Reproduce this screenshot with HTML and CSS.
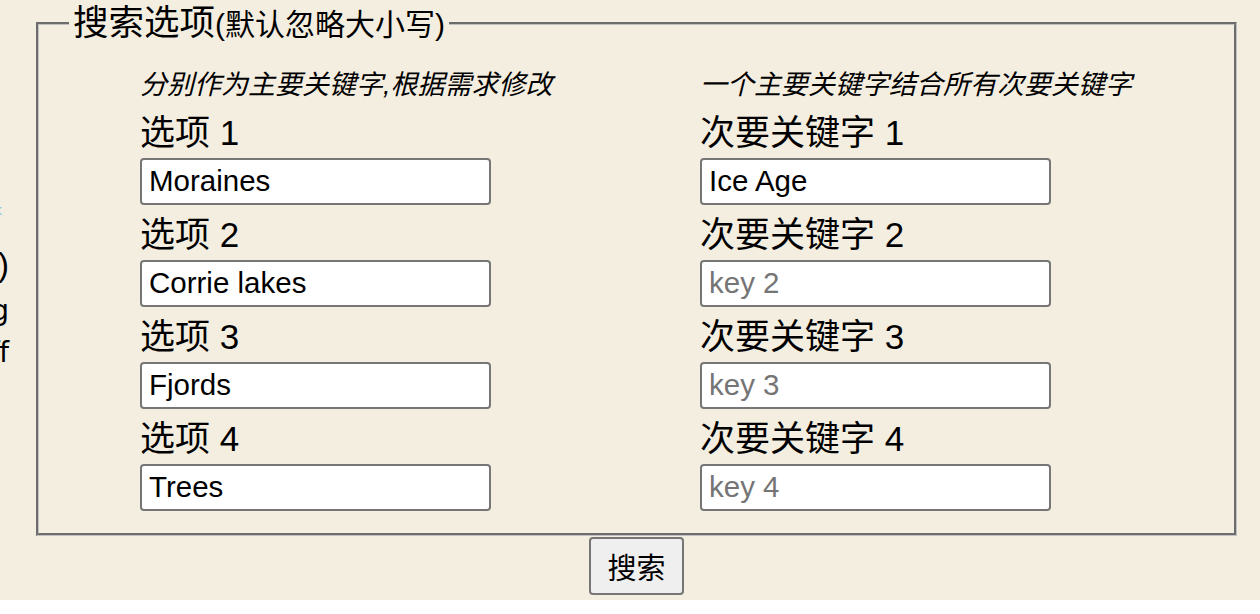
FILE: index.html
```html
<!DOCTYPE html>
<html lang="zh-CN">
<head>
<meta charset="utf-8">
<title>搜索选项</title>
<link rel="stylesheet" href="styles.css">
</head>
<body>
<div class="page">
  <aside class="side">
    <div class="side-line side-link">Link</div>
    <div class="side-line side-paren">(Ctrl+F)</div>
    <div class="side-line">Matching</div>
    <div class="side-line">Off</div>
  </aside>
  <main class="main">
    <form class="search-form">
      <fieldset class="options">
        <legend class="options-legend"><span class="legend-main">搜索选项</span><span class="legend-sub">(默认忽略大小写)</span></legend>
        <div class="columns">
          <div class="col">
            <p class="hint">分别作为主要关键字,根据需求修改</p>
            <label class="field"><span class="field-label">选项 1</span><input class="field-input" type="text" value="Moraines"></label>
            <label class="field"><span class="field-label">选项 2</span><input class="field-input" type="text" value="Corrie lakes"></label>
            <label class="field"><span class="field-label">选项 3</span><input class="field-input" type="text" value="Fjords"></label>
            <label class="field"><span class="field-label">选项 4</span><input class="field-input" type="text" value="Trees"></label>
          </div>
          <div class="col">
            <p class="hint">一个主要关键字结合所有次要关键字</p>
            <label class="field"><span class="field-label">次要关键字 1</span><input class="field-input" type="text" value="Ice Age" placeholder="key 1"></label>
            <label class="field"><span class="field-label">次要关键字 2</span><input class="field-input" type="text" placeholder="key 2"></label>
            <label class="field"><span class="field-label">次要关键字 3</span><input class="field-input" type="text" placeholder="key 3"></label>
            <label class="field"><span class="field-label">次要关键字 4</span><input class="field-input" type="text" placeholder="key 4"></label>
          </div>
        </div>
      </fieldset>
      <div class="actions"><button class="search-btn" type="button">搜索</button></div>
    </form>
  </main>
</div>
</body>
</html>
```
FILE: styles.css
```css
html {
  background: #ffffff;
}

body {
  margin: 0;
  font-family: "Liberation Sans", "Noto Sans CJK SC", sans-serif;
  color: #000;
}

.page {
  display: flex;
  align-items: flex-start;
  background: #f4eee1;
  padding-bottom: 5px;
}

.side {
  flex: none;
  width: 300px;
  margin-left: -291px;
  padding-top: 189px;
  text-align: right;
  white-space: nowrap;
  font-family: "DejaVu Sans", sans-serif;
  font-size: 28px;
  line-height: 42px;
}

.side-line {
  height: 42px;
}

.side-link {
  color: #8ec8e8;
  font-size: 14px;
  height: 55px;
  padding-right: 7px;
}

.side-paren {
  font-family: "Liberation Sans", sans-serif;
  font-size: 33px;
  height: 46px;
}

.main {
  flex: 1;
  min-width: 0;
  margin: 0 23px 0 27px;
}

.search-form {
  margin: 0;
}

.options {
  margin: 0;
  border: 3px groove #c0c0c0;
  padding: 0 0 22px 30px;
  min-width: 0;
}

.options-legend {
  padding: 6px 4px 0;
  line-height: 34px;
}

.legend-main {
  font-size: 35.5px;
}

.legend-sub {
  font-size: 30px;
}

.columns {
  display: grid;
  grid-template-columns: 560px 1fr;
  padding-left: 71px;
  padding-top: 21px;
}

.hint {
  margin: 0 0 10px;
  font-size: 27px;
  line-height: 34px;
  font-style: italic;
}

.field {
  display: block;
  margin-bottom: 9px;
}

.field:last-child {
  margin-bottom: 0;
}

.field-label {
  display: block;
  font-size: 35px;
  line-height: 42px;
  margin-bottom: 4px;
}

.field-input {
  display: block;
  box-sizing: border-box;
  width: 351px;
  height: 47px;
  margin: 0;
  padding: 0 8px 2px 7px;
  border: 2px solid #767676;
  border-radius: 4px;
  background: #fff;
  color: #000;
  font-family: "Liberation Sans", sans-serif;
  font-size: 29.5px;
}

.field-input::placeholder {
  color: #757575;
}

.actions {
  text-align: center;
  padding-top: 1px;
}

.search-btn {
  box-sizing: border-box;
  width: 95px;
  height: 58px;
  padding: 0;
  border: 2px solid #767676;
  border-radius: 4px;
  background: #efefef;
  color: #000;
  font-family: "Liberation Sans", "Noto Sans CJK SC", sans-serif;
  font-size: 29px;
}
```
